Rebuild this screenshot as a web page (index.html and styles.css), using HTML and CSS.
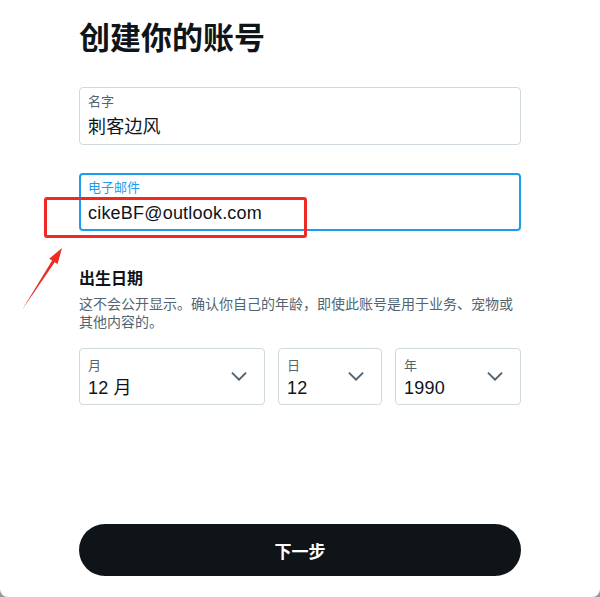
FILE: index.html
```html
<!DOCTYPE html>
<html lang="zh-CN">
<head>
  <meta charset="UTF-8" />
  <title>创建你的账号</title>
  <link rel="stylesheet" href="styles.css">
</head>
<body>

  <div class="card">
    <h1>创建你的账号</h1>

    <div class="field field-name">
      <div class="field-label">名字</div>
      <div class="field-value">刺客边风</div>
    </div>

    <div class="field field-focus">
      <div class="field-label">电子邮件</div>
      <div class="field-value">cikeBF@outlook.com</div>
    </div>

    <h3>出生日期</h3>
    <p class="hint">这不会公开显示。确认你自己的年龄，即使此账号是用于业务、宠物或其他内容的。</p>

    <div class="dates">
      <div class="select">
        <div>
          <div class="select-label">月</div>
          <div class="select-value">12 月</div>
        </div>
        <svg class="chevron" viewBox="0 0 24 24"><path d="M3.543 8.96l1.414-1.42L12 14.59l7.043-7.05 1.414 1.42L12 17.41 3.543 8.96z"/></svg>
      </div>
      <div class="select">
        <div>
          <div class="select-label">日</div>
          <div class="select-value">12</div>
        </div>
        <svg class="chevron" viewBox="0 0 24 24"><path d="M3.543 8.96l1.414-1.42L12 14.59l7.043-7.05 1.414 1.42L12 17.41 3.543 8.96z"/></svg>
      </div>
      <div class="select">
        <div>
          <div class="select-label">年</div>
          <div class="select-value">1990</div>
        </div>
        <svg class="chevron" viewBox="0 0 24 24"><path d="M3.543 8.96l1.414-1.42L12 14.59l7.043-7.05 1.414 1.42L12 17.41 3.543 8.96z"/></svg>
      </div>
    </div>

    <button type="button">下一步</button>

    <!-- marcas rojas de la captura -->
    <div class="mark-box"></div>
    <svg class="mark-arrow" width="80" height="90" viewBox="0 0 80 90">
      <polygon points="22,80 52.1,30.6 49.2,28.7 62,18 57.6,34.1 54.7,32.2" fill="#ee2a24"/>
    </svg>
  </div>

</body>
</html>
```

FILE: styles.css
```css
body {
  margin: 0;
  background-color: #9a9a9a;
  font-family: "Liberation Sans", "Noto Sans CJK SC", sans-serif;
  color: #0f1419;
}
.card {
  position: relative;
  height: 597px;
  box-sizing: border-box;
  padding: 18px 79px 0;
  background-color: white;
  border-radius: 0 0 8px 8px;
}
h1 {
  margin: 0;
  font-family: "Noto Sans CJK SC", sans-serif;
  font-size: 31px;
  line-height: 36px;
  font-weight: 700;
}
.field {
  box-sizing: border-box;
  height: 58px;
  margin-top: 33px;
  padding: 5px 8px 0;
  border: 1px solid #cfd9de;
  border-radius: 4px;
}
.field-focus {
  margin-top: 28px;
  padding: 4px 7px 0;
  border: 2px solid #1d9bf0;
}
.field-label {
  font-family: "Noto Sans CJK SC", sans-serif;
  font-size: 13px;
  line-height: 16px;
  color: #536471;
}
.field-focus .field-label {
  color: #1d9bf0;
}
.field-value {
  margin-top: 7px;
  font-size: 18px;
  letter-spacing: 0.2px;
  line-height: 22px;
}
h3 {
  margin: 36px 0 0;
  font-family: "Noto Sans CJK SC", sans-serif;
  font-size: 16px;
  line-height: 20px;
  font-weight: 700;
}
.hint {
  margin: 7px 0 0;
  font-family: "Noto Sans CJK SC", sans-serif;
  font-size: 14px;
  line-height: 18px;
  color: #536471;
}
.dates {
  display: grid;
  grid-template-columns: 186px 104px 126px;
  gap: 13px;
  margin-top: 18px;
}
.select {
  box-sizing: border-box;
  height: 57px;
  padding: 8px 14px 0 8px;
  border: 1px solid #cfd9de;
  border-radius: 4px;
  display: flex;
  justify-content: space-between;
  align-items: flex-start;
}
.select-label {
  font-family: "Noto Sans CJK SC", sans-serif;
  font-size: 13px;
  line-height: 16px;
  color: #536471;
}
.select-value {
  margin-top: 4px;
  font-size: 18px;
  letter-spacing: 0.2px;
  line-height: 22px;
}
.chevron {
  width: 22px;
  height: 22px;
  margin-top: 8px;
  fill: #536471;
}
button {
  display: block;
  width: 100%;
  height: 52px;
  margin-top: 119px;
  border: none;
  border-radius: 26px;
  background-color: #0f1419;
  color: white;
  font-family: "Noto Sans CJK SC", sans-serif;
  font-size: 17px;
  font-weight: 700;
  cursor: pointer;
}
.mark-box {
  position: absolute;
  left: 44px;
  top: 197px;
  width: 263px;
  height: 41px;
  box-sizing: border-box;
  border: 3px solid #ee2a24;
  border-radius: 3px;
}
.mark-arrow {
  position: absolute;
  left: 0;
  top: 230px;
}
```
